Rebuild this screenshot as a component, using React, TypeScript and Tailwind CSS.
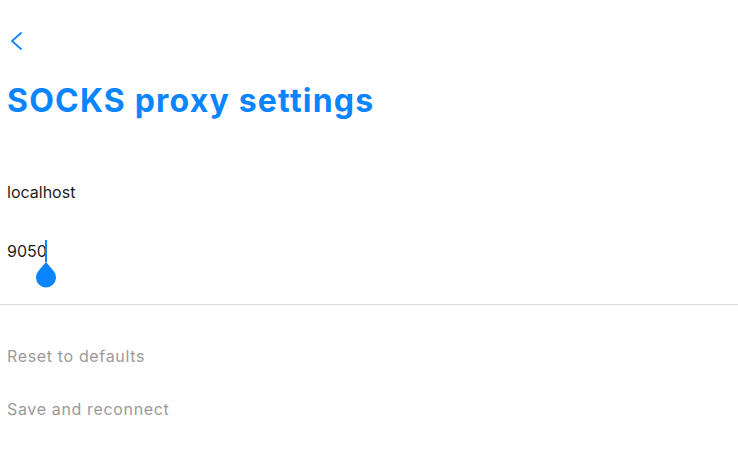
export default function App() {
  return (
    <div className="w-[738px] h-[467px] bg-white overflow-hidden pt-[32px] font-['Inter',sans-serif]">
      {/* Back button */}
      <button className="block ml-[9px] text-[#0a84ff]">
        <svg width="14" height="18" viewBox="0 0 14 18" fill="none" className="block">
          <path d="M12 1 L3 9 L12 17" stroke="currentColor" strokeWidth="1.7" strokeLinecap="round" strokeLinejoin="round" />
        </svg>
      </button>

      <h1 className="mt-[32px] pl-[7px] text-[32px] leading-[38px] font-bold text-[#0a84ff] tracking-[1.2px]">
        SOCKS proxy settings
      </h1>

      {/* Host and port fields */}
      <div className="pl-[7px] text-[16px] leading-[20px] text-[#1c1c1c]">
        <div className="mt-[62px]">localhost</div>
        <div className="mt-[39px] relative">
          <span>9050</span>
          <span className="absolute left-[38px] top-[-1px] w-[2px] h-[22px] bg-[#0a84ff]" />
          <svg className="absolute left-[28px] top-[20px]" width="22" height="28" viewBox="0 0 22 28">
            <path d="M11 1 L18.66 10.07 A10 10 0 1 1 3.34 10.07 Z" fill="#0a84ff" />
          </svg>
        </div>
      </div>

      <div className="mt-[43px] h-px bg-[#dadada]" />

      {/* Actions */}
      <div className="pl-[7px] text-[16px] leading-[20px] text-[#9a9a9a] tracking-[0.65px]">
        <div className="mt-[41px]">Reset to defaults</div>
        <div className="mt-[33px]">Save and reconnect</div>
      </div>
    </div>
  );
}
